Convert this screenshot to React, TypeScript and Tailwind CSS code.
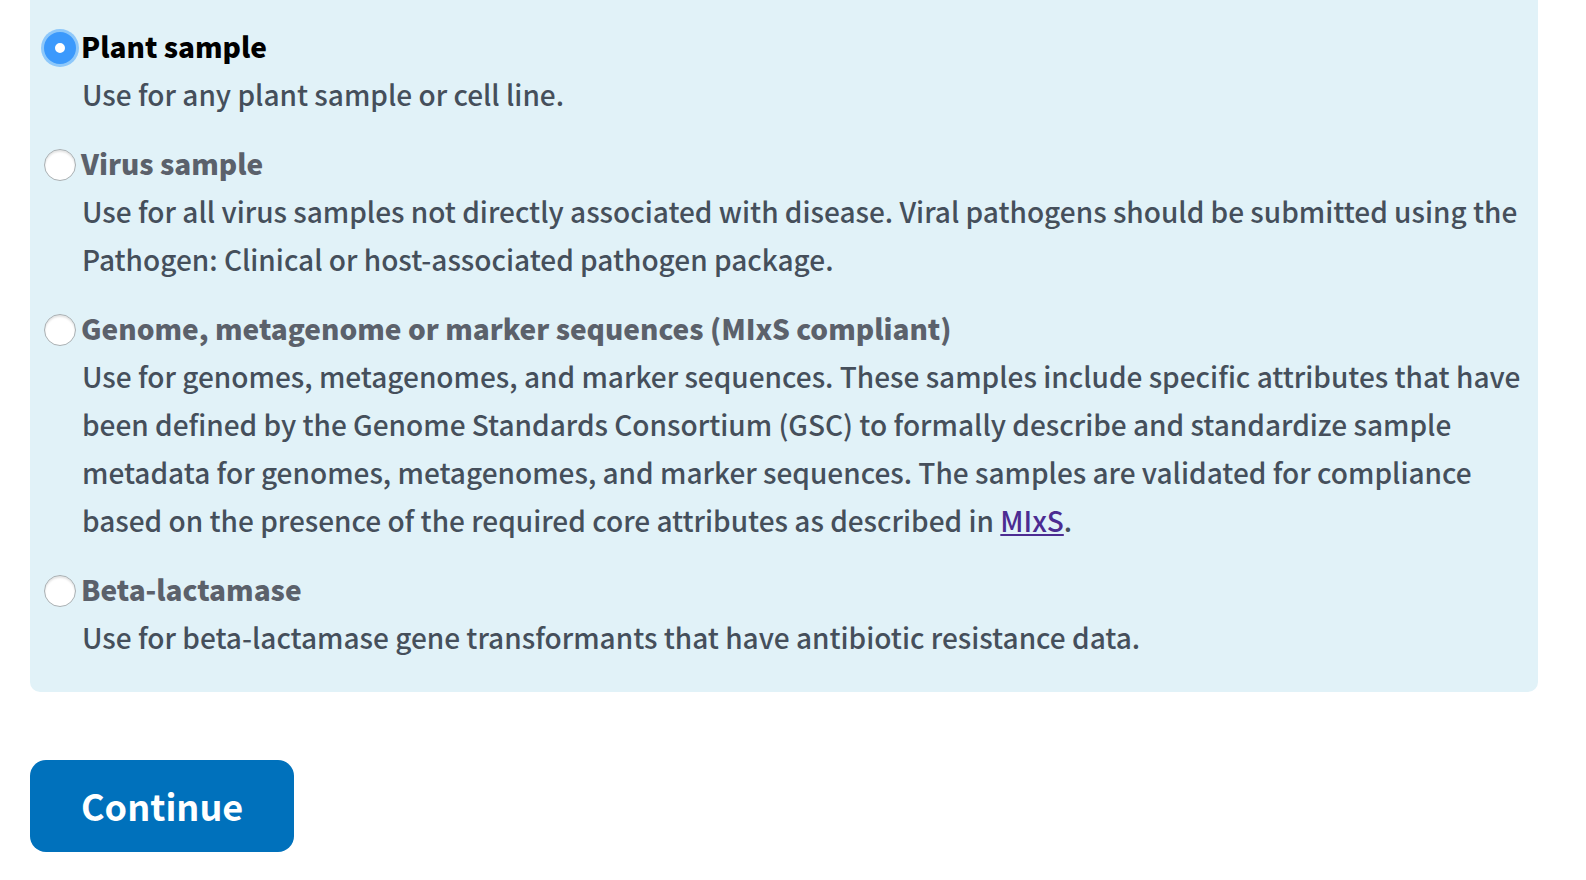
import React, { useState } from "react";

const options = [
  { id: "plant", title: "Plant sample", text: "Use for any plant sample or cell line." },
  {
    id: "virus",
    title: "Virus sample",
    text: "Use for all virus samples not directly associated with disease. Viral pathogens should be submitted using the Pathogen: Clinical or host-associated pathogen package.",
  },
  {
    id: "mixs",
    title: "Genome, metagenome or marker sequences (MIxS compliant)",
    text: (
      <>
        Use for genomes, metagenomes, and marker sequences. These samples include specific attributes that have been
        defined by the Genome Standards Consortium (GSC) to formally describe and standardize sample metadata for
        genomes, metagenomes, and marker sequences. The samples are validated for compliance based on the presence of
        the required core attributes as described in{" "}
        <a href="#mixs" className="text-[#4c2c92] underline decoration-2 underline-offset-2">MIxS</a>.
      </>
    ),
  },
  {
    id: "beta",
    title: "Beta-lactamase",
    text: "Use for beta-lactamase gene transformants that have antibiotic resistance data.",
  },
];

export default function App() {
  const [selected, setSelected] = useState("plant");
  return (
    <main className="min-h-screen bg-white px-[30px] pb-7 font-['Noto_Sans_CJK_SC',sans-serif] text-[28px] leading-[48px] font-medium text-[#454f5b]">
      <fieldset className="mr-[18px] flex flex-col gap-[21px] rounded-b-[10px] bg-[#e1f2f8] pt-[22px] pr-2 pb-[31px] pl-[14px]">
        {options.map((o) => (
          <div key={o.id}>
            <div className="flex items-start gap-[5px]">
              <input
                id={o.id}
                type="radio"
                name="package"
                checked={selected === o.id}
                onChange={() => setSelected(o.id)}
                className="mt-[10px] size-8 shrink-0 appearance-none rounded-full border border-[#a9b0b3] bg-white shadow-[inset_0_2px_2px_#e4e4e4] checked:border-[11px] checked:border-[#3b99fc] checked:shadow-[0_0_0_3px_#8ec8fa]"
              />
              <label htmlFor={o.id} className={selected === o.id ? "font-black text-black" : "font-black text-[#5b616b]"}>
                {o.title}
              </label>
            </div>
            <p className="pl-[38px]">{o.text}</p>
          </div>
        ))}
      </fieldset>
      <button type="button" className="mt-[68px] h-[92px] rounded-2xl bg-[#0071bc] px-[51px] pb-[2px] text-[36px] font-bold text-white">
        Continue
      </button>
    </main>
  );
}
